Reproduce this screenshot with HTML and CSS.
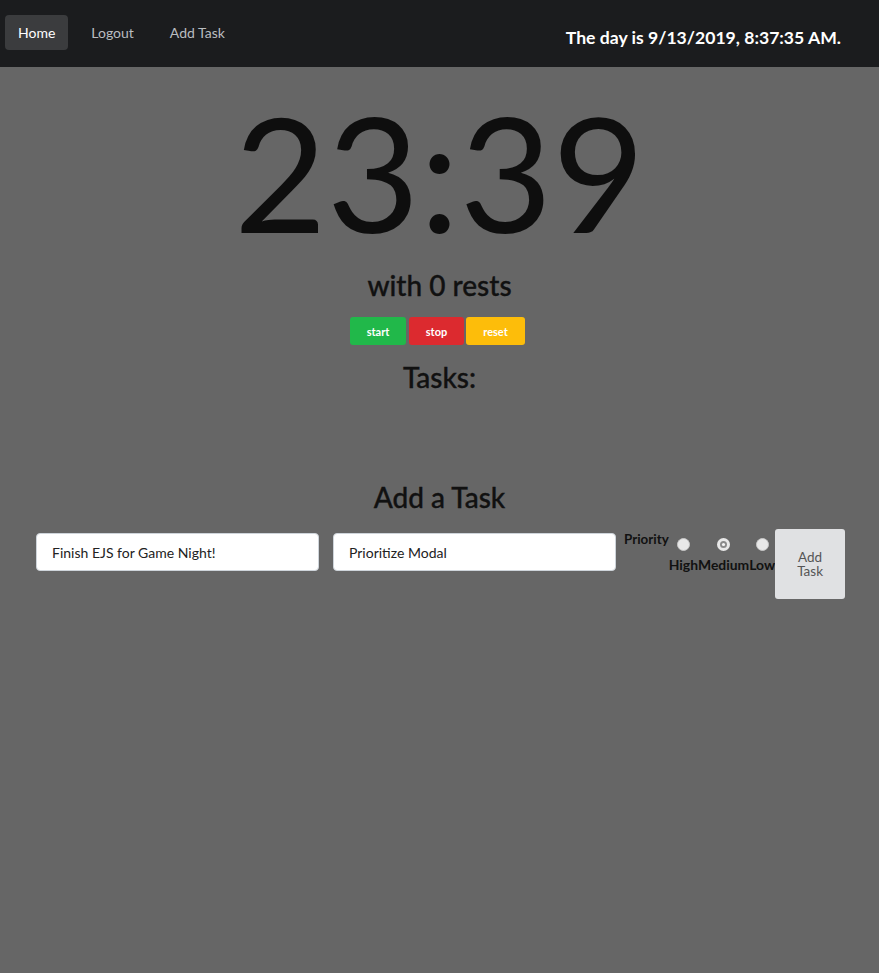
FILE: index.html
```html
<!DOCTYPE html>
<html>
<head>
<meta charset="utf-8">
<link rel="stylesheet" href="styles.css">
</head>
<body>
<nav class="navbar">
  <ul class="nav-links">
    <li><a class="nav-link active" href="#">Home</a></li>
    <li><a class="nav-link" href="#">Logout</a></li>
    <li><a class="nav-link" href="#">Add Task</a></li>
  </ul>
  <div class="clock">The day is 9/13/2019, 8:37:35 AM.</div>
</nav>
<main class="main">
  <div class="timer">23:39</div>
  <h2 class="heading rests">with 0 rests</h2>
  <div class="controls">
    <button class="btn btn-start">start</button>
    <button class="btn btn-stop">stop</button>
    <button class="btn btn-reset">reset</button>
  </div>
  <h2 class="heading tasks">Tasks:</h2>
  <h2 class="heading add-title">Add a Task</h2>
  <form class="task-form">
    <input class="field" type="text" value="Finish EJS for Game Night!">
    <input class="field field-2" type="text" value="Prioritize Modal">
    <div class="priority">
      <span class="priority-label">Priority</span>
      <div class="radios">
        <label class="radio-item"><span class="radio"></span><span class="radio-text">High</span></label>
        <label class="radio-item"><span class="radio checked"></span><span class="radio-text">Medium</span></label>
        <label class="radio-item"><span class="radio"></span><span class="radio-text">Low</span></label>
      </div>
    </div>
    <button class="add-btn" type="button">Add<br>Task</button>
  </form>
</main>
</body>
</html>
```
FILE: styles.css
```css
* { box-sizing: border-box; }
html, body {
  margin: 0;
  height: 100%;
}
body {
  background: #666666;
  font-family: Lato, "Open Sans", sans-serif;
  color: #111;
}
.navbar {
  height: 67px;
  background: #1b1c1e;
  display: flex;
  align-items: flex-start;
  justify-content: space-between;
  padding: 15px 38px 0 5px;
}
.nav-links {
  list-style: none;
  margin: 0;
  padding: 0;
  display: flex;
  gap: 10px;
}
.nav-link {
  display: block;
  height: 35px;
  line-height: 35px;
  padding: 0 13px;
  font-size: 14px;
  color: #b9bcc0;
  text-decoration: none;
  border-radius: 4px;
}
.nav-link.active {
  background: #3b3c3e;
  color: #fff;
}
.clock {
  color: #fff;
  font-weight: 700;
  font-size: 17.6px;
  margin-top: 12px;
}
.main {
  display: flex;
  flex-direction: column;
  align-items: center;
}
.timer {
  font-size: 160px;
  font-weight: 400;
  line-height: 1;
  color: #0e0e0e;
  margin-top: 24px;
}
.heading {
  font-size: 28px;
  font-weight: 500;
  margin: 0;
  line-height: 34px;
  color: #111;
  -webkit-text-stroke: 0.35px #111;
}
.rests { margin-top: 17px; }
.controls {
  display: flex;
  gap: 3px;
  margin-top: 15px;
  margin-right: 4px;
}
.btn {
  border: none;
  height: 28px;
  border-radius: 3px;
  color: #fff;
  font-family: Lato, sans-serif;
  font-weight: 700;
  font-size: 11px;
  padding: 0;
}
.btn-start { background: #21b84a; width: 56px; }
.btn-stop { background: #dc2a2f; width: 55px; margin-right: -1px; }
.btn-reset { background: #fdbd0a; width: 59px; }
.tasks { margin-top: 15px; }
.add-title { margin-top: 86px; }
.task-form {
  align-self: stretch;
  display: flex;
  align-items: flex-start;
  padding: 0 34px 0 36px;
  margin-top: 15px;
}
.field {
  flex-shrink: 0;
  width: 283px;
  height: 38px;
  border: 1px solid #ced4da;
  border-radius: 4px;
  background: #fff;
  padding: 0 15px;
  font-family: Lato, sans-serif;
  font-size: 14px;
  color: #222;
  margin-top: 4px;
}
.field-2 { margin-left: 14px; }
.priority {
  flex-shrink: 0;
  display: flex;
  align-items: flex-start;
  margin-left: 8px;
}
.priority-label {
  font-weight: 700;
  font-size: 13.4px;
  margin-top: 2px;
}
.radios {
  display: flex;
  margin-top: 9px;
}
.radio-item {
  display: flex;
  flex-direction: column;
  align-items: center;
  font-weight: 700;
  font-size: 13.9px;
}
.radio {
  width: 13px;
  height: 13px;
  border-radius: 50%;
  background: #e8e8e8;
  border: 1px solid #c9c9c9;
  margin-bottom: 5px;
  position: relative;
}
.radio.checked {
  border: 3px solid #e8e8e8;
  background: #8a8a8a;
}
.radio.checked::after {
  content: "";
  position: absolute;
  inset: 0;
  border-radius: 50%;
  background: #f4f4f4;
  transform: scale(0.45);
}
.add-btn {
  flex-shrink: 0;
  width: 70px;
  height: 70px;
  border: none;
  border-radius: 3px;
  background: #e0e1e3;
  color: #555;
  font-family: Lato, sans-serif;
  font-size: 13.5px;
  line-height: 14px;
  padding: 0;
}
```
